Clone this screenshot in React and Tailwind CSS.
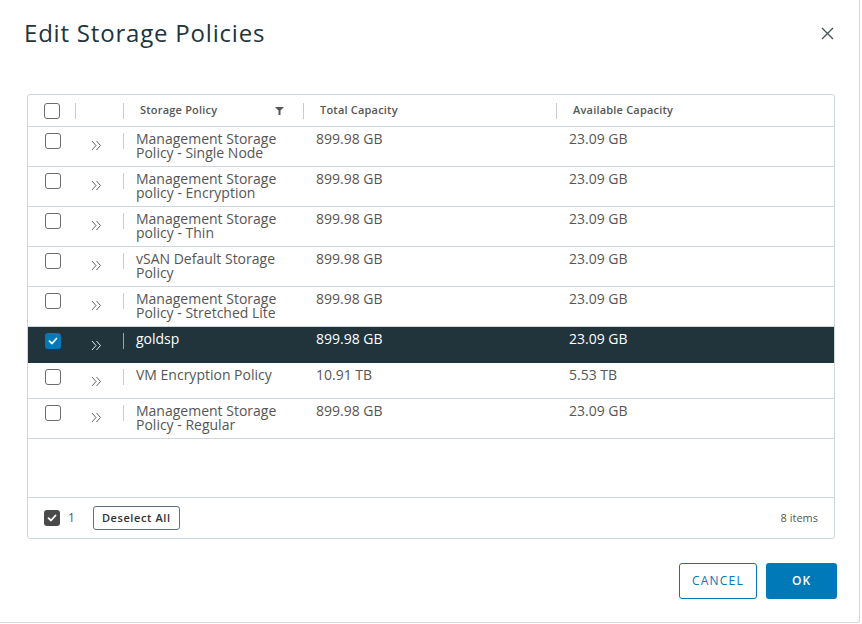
import React from 'react';

const rows = [
  { name: ['Management Storage', 'Policy - Single Node'], total: '899.98 GB', avail: '23.09 GB' },
  { name: ['Management Storage', 'policy - Encryption'], total: '899.98 GB', avail: '23.09 GB' },
  { name: ['Management Storage', 'policy - Thin'], total: '899.98 GB', avail: '23.09 GB' },
  { name: ['vSAN Default Storage', 'Policy'], total: '899.98 GB', avail: '23.09 GB' },
  { name: ['Management Storage', 'Policy - Stretched Lite'], total: '899.98 GB', avail: '23.09 GB' },
  { name: ['goldsp'], total: '899.98 GB', avail: '23.09 GB', selected: true },
  { name: ['VM Encryption Policy'], total: '10.91 TB', avail: '5.53 TB' },
  { name: ['Management Storage', 'Policy - Regular'], total: '899.98 GB', avail: '23.09 GB' },
];

function Check({ on, dark }) {
  if (on) {
    return (
      <div className={`w-4 h-4 rounded-[3px] flex items-center justify-center ${dark ? 'bg-[#4a4a4a]' : 'bg-[#0079b8]'}`}>
        <svg width="10" height="8" viewBox="0 0 10 8">
          <path d="M1.5 4.2 L4 6.5 L8.5 1.5" fill="none" stroke="#fff" strokeWidth="1.8" strokeLinecap="round" strokeLinejoin="round" />
        </svg>
      </div>
    );
  }
  return <div className="w-4 h-4 rounded-[3px] border border-[#6b6b6b] bg-white" />;
}

function Chevrons({ light }) {
  return (
    <svg width="11" height="11" viewBox="0 0 11 11">
      <path d="M1 1 L5 5.5 L1 10 M5.5 1 L9.5 5.5 L5.5 10" fill="none" stroke={light ? '#ffffff' : '#565656'} strokeWidth="0.9" />
    </svg>
  );
}

function Sep({ light }) {
  return <div className={`w-px h-4 ${light ? 'bg-[#9aa5aa]' : 'bg-[#cccccc]'}`} />;
}

export default function App() {
  return (
    <div className="w-[862px] h-[624px] bg-white" style={{ fontFamily: "'Open Sans', 'Liberation Sans', sans-serif" }}>
      <div className="w-[860px] h-[623px] bg-white border-r border-b border-[#d7d7d7] rounded-br-[3px] flex flex-col">
        <div className="flex justify-between pl-6 pr-[25px] pt-[17px] h-[94px] items-start">
          <div className="text-[24px] leading-[32px] text-[#22343c] tracking-[0.8px]">Edit Storage Policies</div>
          <svg width="13" height="13" viewBox="0 0 13 13" className="mt-[10px]">
            <path d="M1 1 L12 12 M12 1 L1 12" stroke="#44565e" strokeWidth="1.4" />
          </svg>
        </div>

        <div className="ml-[27px] w-[808px] h-[445px] border border-[#ccd6db] rounded-[3px] flex flex-col text-[#565656]">
          {/* header */}
          <div className="flex h-[32px] items-center border-b border-[#ccd6db] text-[11px] font-semibold tracking-[0.2px]">
            <div className="w-[47px] pl-[16px] flex items-center h-full"><Check /></div>
            <Sep />
            <div className="w-[47px]" />
            <Sep />
            <div className="w-[179px] pl-[16px] pr-[19px] flex items-center justify-between">
              <span>Storage Policy</span>
              <svg width="9" height="8" viewBox="0 0 9 8">
                <path d="M0 0 H9 L5.5 3.5 V8 H3.5 V3.5 Z" fill="#565656" />
              </svg>
            </div>
            <Sep />
            <div className="w-[252px] pl-[16px]">Total Capacity</div>
            <Sep />
            <div className="flex-1 pl-[16px]">Available Capacity</div>
          </div>

          {/* rows */}
          {rows.map((r, i) => (
            <div
              key={i}
              className={`flex border-b text-[14px] leading-[14px] ${r.name.length > 1 ? 'h-[40px]' : 'h-[36px]'} ${r.selected ? 'bg-[#21333b] text-white border-[#21333b]' : 'border-[#ccd6db]'}`}
            >
              <div className="w-[47px] pl-[17px] pt-[6px]"><Check on={r.selected} /></div>
              <div className="w-[48px] pl-[16px] pt-[13px]"><Chevrons light={r.selected} /></div>
              <div className="pt-[6px]"><Sep light={r.selected} /></div>
              <div className={`w-[179px] pl-[12px] pt-[5px] ${r.selected ? 'font-medium' : ''}`}>
                {r.name.map((n, j) => <div key={j}>{n}</div>)}
              </div>
              <div className={`w-[253px] pl-[13px] pt-[5px] ${r.selected ? 'font-medium' : ''}`}>{r.total}</div>
              <div className={`flex-1 pl-[13px] pt-[5px] ${r.selected ? 'font-medium' : ''}`}>{r.avail}</div>
            </div>
          ))}

          <div className="flex-1" />

          {/* footer */}
          <div className="h-[41px] border-t border-[#ccd6db] flex items-center pl-[16px] pr-[16px]">
            <Check on dark />
            <span className="ml-[8px] text-[12px] text-[#565656]">1</span>
            <button className="ml-[18px] h-[24px] px-[8px] border border-[#5d737e] rounded-[3px] text-[11px] font-semibold tracking-[0.6px] text-[#313131] bg-white">
              Deselect All
            </button>
            <div className="flex-1" />
            <span className="text-[11px] text-[#565656]">8 items</span>
          </div>
        </div>

        <div className="flex justify-end gap-[9px] pr-[22px] mt-[24px]">
          <button className="w-[78px] h-[36px] border border-[#0079b8] rounded-[3px] text-[12px] font-medium tracking-[1.2px] text-[#0079b8] bg-white">
            CANCEL
          </button>
          <button className="w-[71px] h-[36px] rounded-[3px] text-[12px] font-semibold tracking-[1px] text-white bg-[#0079b8]">
            OK
          </button>
        </div>
      </div>
    </div>
  );
}
